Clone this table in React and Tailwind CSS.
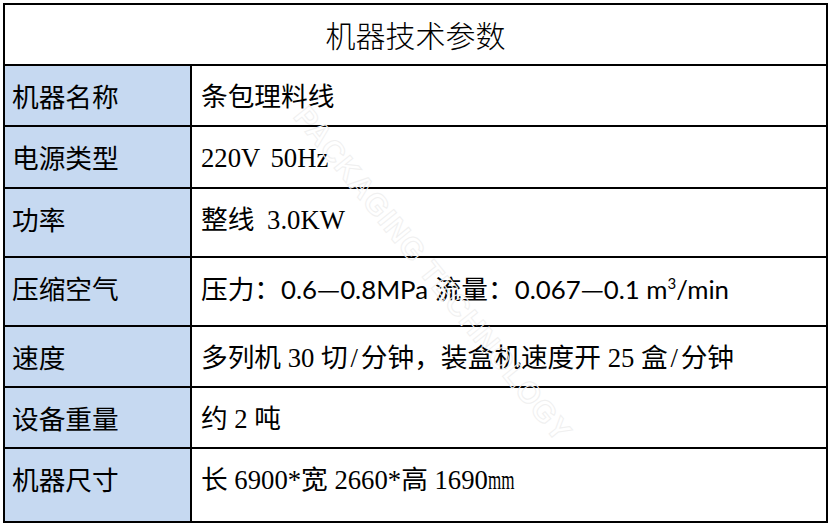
import React from "react";

const cjk = "[font-family:'Noto_Sans_CJK_SC',sans-serif]";
const serif = "[font-family:'Liberation_Serif','Noto_Sans_CJK_SC',serif]";
const sans = "[font-family:'Lato','Noto_Sans_CJK_SC',sans-serif]";

const Dash = () => <span className={cjk}>—</span>;
const Slash = () => <span className="inline-block w-[13px] text-center">/</span>;

const rows = [
  { label: "机器名称", h: "h-[61px]", value: <span className={serif}>条包理料线</span> },
  { label: "电源类型", h: "h-[62px]", value: <span className={serif + " [word-spacing:4px]"}>220V 50Hz</span> },
  { label: "功率", h: "h-[69px]", value: <span className={serif + " [word-spacing:6px]"}>整线 3.0KW</span> },
  {
    label: "压缩空气",
    h: "h-[69px]",
    value: (
      <span className={sans + " text-[25.8px]"}>
        <span className={cjk + " text-[26.7px]"}>压力：</span>0.6<Dash />0.8MPa{" "}
        <span className={cjk + " text-[26.7px]"}>流量：</span>0.067<Dash />0.1 m
        <span className="relative -top-[10px] text-[15px]">3</span>/min
      </span>
    ),
  },
  {
    label: "速度",
    h: "h-[61px]",
    value: (
      <span className={serif}>
        多列机 30 切<Slash />分钟，装盒机速度开 25 盒<Slash />分钟
      </span>
    ),
  },
  { label: "设备重量", h: "h-[61px]", value: <span className={serif}>约 2 吨</span> },
  {
    label: "机器尺寸",
    h: "h-[72px]",
    value: (
      <span className={serif}>
        长 6900*宽 2660*高 1690<span className="inline-block w-[27px] origin-left scale-x-[0.64]">mm</span>
      </span>
    ),
    last: true,
  },
];

export default function App() {
  return (
    <div className="relative w-[831px] h-[526px] overflow-hidden bg-white pt-[3px] pl-[3px] text-black">
      <div className="w-[825px] border-2 border-black">
        <div className={"h-[61px] border-b-2 border-black flex items-center justify-center text-[30px] font-light " + cjk}>
          机器技术参数
        </div>
        {rows.map((r) => (
          <div key={r.label} className={"flex " + r.h + (r.last ? "" : " border-b-2 border-black")}>
            <div className={"w-[187px] shrink-0 bg-[#c6d9f1] border-r-2 border-black pl-[7px] pt-[17px] text-[26.7px] leading-[26.7px] " + cjk}>
              {r.label}
            </div>
            <div className="flex-1 pl-[9px] pt-[17px] text-[26.7px] leading-[26.7px] whitespace-nowrap">{r.value}</div>
          </div>
        ))}
      </div>
      <div className="pointer-events-none absolute left-[318px] top-[96px] origin-top-left rotate-[51deg] whitespace-nowrap text-[30px] font-bold tracking-[1px] text-transparent [font-family:'Liberation_Sans',sans-serif] [-webkit-text-stroke:1px_#f0f0f0]">
        PACKAGING TECHNOLOGY
      </div>
    </div>
  );
}
